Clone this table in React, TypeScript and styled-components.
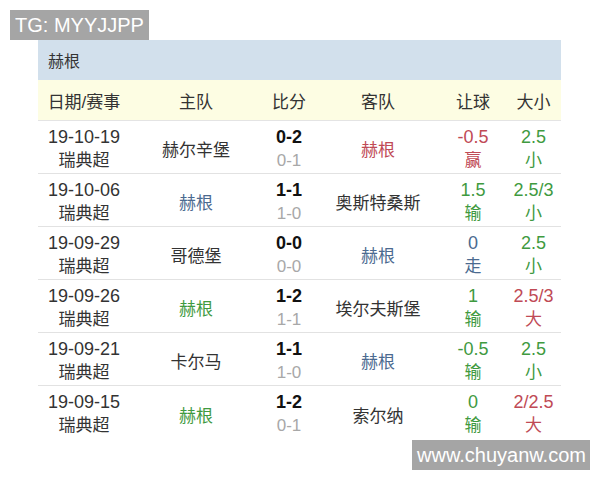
import * as React from 'react';
import styled, { createGlobalStyle } from 'styled-components';

const GlobalStyle = createGlobalStyle`
  html, body {
    margin: 0;
    padding: 0;
    background: #ffffff;
  }
  body {
    font-family: "Liberation Sans", "Noto Sans CJK SC", sans-serif;
    color: #333333;
  }
`;

const Page = styled.div`
  position: relative;
  width: 600px;
  height: 480px;
  padding: 40px 0 0 38px;
  box-sizing: border-box;
  overflow: hidden;
`;

const Stamp = styled.div<{ $top: number; $left: number; $width: number }>`
  position: absolute;
  top: ${(p) => p.$top}px;
  left: ${(p) => p.$left}px;
  width: ${(p) => p.$width}px;
  height: 30px;
  background: #a5a5a5;
  color: #ffffff;
  font-size: 20px;
  line-height: 30px;
  padding-left: 5px;
  box-sizing: border-box;
  white-space: nowrap;
  z-index: 2;
`;

const Table = styled.div`
  width: 523px;
`;

const TitleBar = styled.div`
  height: 40px;
  background: #d2e0ec;
  display: flex;
  align-items: center;
  padding-left: 10px;
  font-size: 16px;
  color: #333333;
`;

const COLS = '92px 132px 54px 124px 66px 55px';

const HeaderRow = styled.div`
  display: grid;
  grid-template-columns: ${COLS};
  height: 41px;
  align-items: center;
  background: #fdfde3;
  border-bottom: 1px solid #e4e4e4;
  font-size: 17px;
  color: #333333;
  text-align: center;
  box-sizing: border-box;
`;

const Row = styled.div<{ $last?: boolean }>`
  display: grid;
  grid-template-columns: ${COLS};
  height: 53px;
  padding-top: 3px;
  align-items: center;
  text-align: center;
  border-bottom: ${(p) => (p.$last ? 'none' : '1px solid #e2e2e2')};
  box-sizing: border-box;
`;

const Stack = styled.div`
  display: flex;
  flex-direction: column;
  align-items: center;
  line-height: 24px;
`;

const Line = styled.span<{ $color?: string; $size?: number; $weight?: number }>`
  color: ${(p) => p.$color || '#333333'};
  font-size: ${(p) => p.$size || 17}px;
  font-weight: ${(p) => p.$weight || 400};
  white-space: nowrap;
`;

const Team = styled.span<{ $color: string }>`
  color: ${(p) => p.$color};
  font-size: 17px;
  white-space: nowrap;
`;

const C = {
  dark: '#333333',
  blue: '#4b6a90',
  red: '#c04a55',
  green: '#3f9a3f',
  gray: '#a8a8a8',
};

type Match = {
  date: string;
  home: string;
  homeColor: string;
  full: string;
  half: string;
  away: string;
  awayColor: string;
  hcp: string;
  hcpRes: string;
  hcpColor: string;
  ou: string;
  ouRes: string;
  ouColor: string;
};

const matches: Match[] = [
  { date: '19-10-19', home: '赫尔辛堡', homeColor: C.dark, full: '0-2', half: '0-1', away: '赫根', awayColor: C.red, hcp: '-0.5', hcpRes: '赢', hcpColor: C.red, ou: '2.5', ouRes: '小', ouColor: C.green },
  { date: '19-10-06', home: '赫根', homeColor: C.blue, full: '1-1', half: '1-0', away: '奥斯特桑斯', awayColor: C.dark, hcp: '1.5', hcpRes: '输', hcpColor: C.green, ou: '2.5/3', ouRes: '小', ouColor: C.green },
  { date: '19-09-29', home: '哥德堡', homeColor: C.dark, full: '0-0', half: '0-0', away: '赫根', awayColor: C.blue, hcp: '0', hcpRes: '走', hcpColor: C.blue, ou: '2.5', ouRes: '小', ouColor: C.green },
  { date: '19-09-26', home: '赫根', homeColor: C.green, full: '1-2', half: '1-1', away: '埃尔夫斯堡', awayColor: C.dark, hcp: '1', hcpRes: '输', hcpColor: C.green, ou: '2.5/3', ouRes: '大', ouColor: C.red },
  { date: '19-09-21', home: '卡尔马', homeColor: C.dark, full: '1-1', half: '1-0', away: '赫根', awayColor: C.blue, hcp: '-0.5', hcpRes: '输', hcpColor: C.green, ou: '2.5', ouRes: '小', ouColor: C.green },
  { date: '19-09-15', home: '赫根', homeColor: C.green, full: '1-2', half: '0-1', away: '索尔纳', awayColor: C.dark, hcp: '0', hcpRes: '输', hcpColor: C.green, ou: '2/2.5', ouRes: '大', ouColor: C.red },
];

const headers = ['日期/赛事', '主队', '比分', '客队', '让球', '大小'];

export default function App() {
  return (
    <Page>
      <GlobalStyle />
      <Stamp $top={10} $left={10} $width={139}>TG: MYYJJPP</Stamp>
      <Table>
        <TitleBar>赫根</TitleBar>
        <HeaderRow>
          {headers.map((h) => (
            <span key={h}>{h}</span>
          ))}
        </HeaderRow>
        {matches.map((m, i) => (
          <Row key={m.date} $last={i === matches.length - 1}>
            <Stack>
              <Line $size={18}>{m.date}</Line>
              <Line>瑞典超</Line>
            </Stack>
            <Team $color={m.homeColor}>{m.home}</Team>
            <Stack>
              <Line $size={18} $color="#111111" $weight={700}>{m.full}</Line>
              <Line $size={17} $color={C.gray}>{m.half}</Line>
            </Stack>
            <Team $color={m.awayColor}>{m.away}</Team>
            <Stack>
              <Line $size={18} $color={m.hcpColor}>{m.hcp}</Line>
              <Line $color={m.hcpColor}>{m.hcpRes}</Line>
            </Stack>
            <Stack>
              <Line $size={18} $color={m.ouColor}>{m.ou}</Line>
              <Line $color={m.ouColor}>{m.ouRes}</Line>
            </Stack>
          </Row>
        ))}
      </Table>
      <Stamp $top={440} $left={412} $width={178}>www.chuyanw.com</Stamp>
    </Page>
  );
}
